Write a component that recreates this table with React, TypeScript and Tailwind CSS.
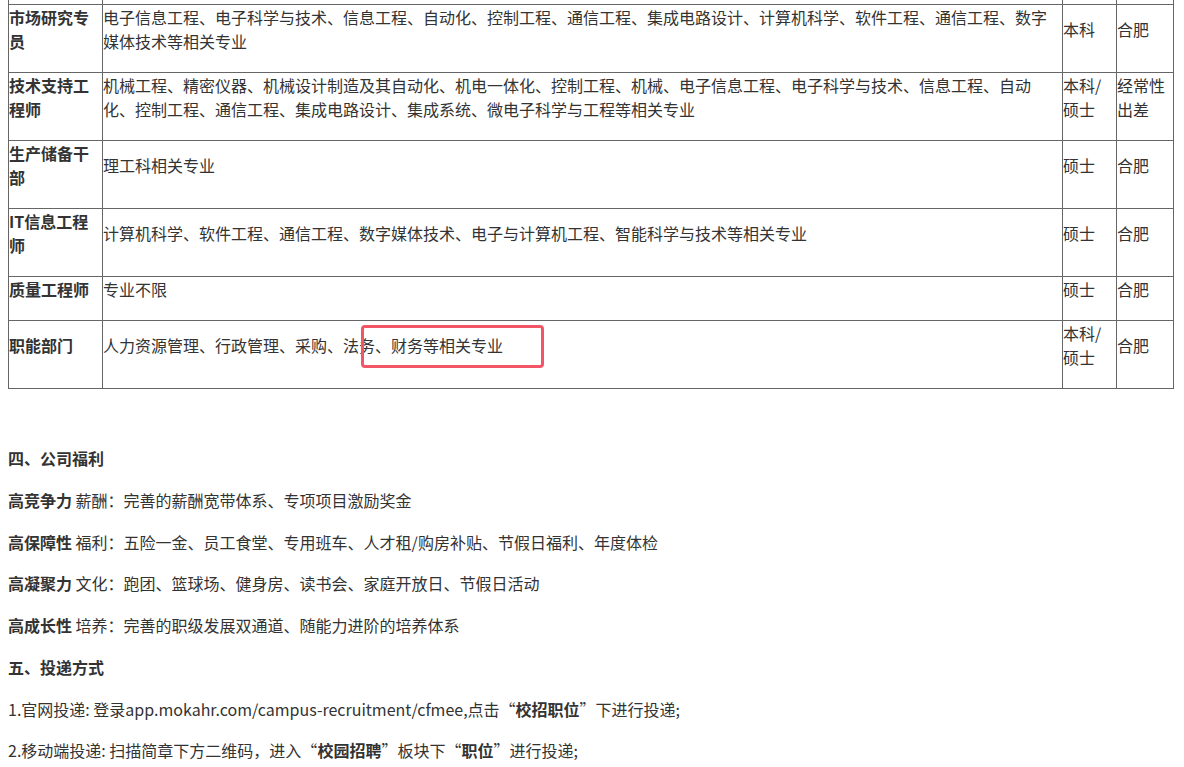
import React from 'react';

type Row = { title: string; major: string; degree: string; place: string };

const rows: Row[] = [
  {
    title: '市场研究专员',
    major: '电子信息工程、电子科学与技术、信息工程、自动化、控制工程、通信工程、集成电路设计、计算机科学、软件工程、通信工程、数字媒体技术等相关专业',
    degree: '本科',
    place: '合肥',
  },
  {
    title: '技术支持工程师',
    major: '机械工程、精密仪器、机械设计制造及其自动化、机电一体化、控制工程、机械、电子信息工程、电子科学与技术、信息工程、自动化、控制工程、通信工程、集成电路设计、集成系统、微电子科学与工程等相关专业',
    degree: '本科/硕士',
    place: '经常性出差',
  },
  { title: '生产储备干部', major: '理工科相关专业', degree: '硕士', place: '合肥' },
  {
    title: 'IT信息工程师',
    major: '计算机科学、软件工程、通信工程、数字媒体技术、电子与计算机工程、智能科学与技术等相关专业',
    degree: '硕士',
    place: '合肥',
  },
  { title: '质量工程师', major: '专业不限', degree: '硕士', place: '合肥' },
  { title: '职能部门', major: '人力资源管理、行政管理、采购、法务、财务等相关专业', degree: '本科/硕士', place: '合肥' },
];

const benefits = [
  { head: '高竞争力', text: '薪酬：完善的薪酬宽带体系、专项项目激励奖金' },
  { head: '高保障性', text: '福利：五险一金、员工食堂、专用班车、人才租/购房补贴、节假日福利、年度体检' },
  { head: '高凝聚力', text: '文化：跑团、篮球场、健身房、读书会、家庭开放日、节假日活动' },
  { head: '高成长性', text: '培养：完善的职级发展双通道、随能力进阶的培养体系' },
];

const cell = 'border border-[#666] align-middle p-0 pb-[19px] break-all';

export default function App() {
  return (
    <div
      className="h-[767px] overflow-hidden bg-white px-2 text-[16px] leading-[24px] text-[#333]"
      style={{ fontFamily: '"Noto Sans CJK SC", "Noto Sans", sans-serif' }}
    >
      <div className="relative -mt-[40px]">
        <table className="w-[1166px] table-fixed border-collapse">
          <colgroup>
            <col className="w-[94px]" />
            <col className="w-[960px]" />
            <col className="w-[54px]" />
            <col className="w-[57px]" />
          </colgroup>
          <tbody>
            {/* 上一行（滚出视口） */}
            <tr className="h-[44px]">
              <td className="border border-[#666]" />
              <td className="border border-[#666]" />
              <td className="border border-[#666]" />
              <td className="border border-[#666]" />
            </tr>
            {rows.map((r, i) => (
              <tr key={i} className={i === rows.length - 1 ? 'h-[67px]' : ''}>
                <td className={`${cell} font-bold`}>{r.title}</td>
                <td className={cell}>{r.major}</td>
                <td className={cell}>{r.degree}</td>
                <td className={cell}>{r.place}</td>
              </tr>
            ))}
          </tbody>
        </table>
        {/* 高亮框 */}
        <div className="pointer-events-none absolute left-[353px] bottom-[21px] h-[43px] w-[183px] rounded-[4px] border-[3px] border-[#f25566]" />
      </div>

      <div className="leading-[24px]">
        <p className="mt-[15.7px]">&nbsp;</p>
        <p className="mt-[17.7px] font-bold">四、公司福利</p>
        {benefits.map((b) => (
          <p key={b.head} className="mt-[17.7px]">
            <span className="font-bold">{b.head}</span> {b.text}
          </p>
        ))}
        <p className="mt-[17.7px] font-bold">五、投递方式</p>
        <p className="mt-[17.7px]">
          1.官网投递: 登录app.mokahr.com/campus-recruitment/cfmee,点击“<span className="font-bold">校招职位</span>”下进行投递;
        </p>
        <p className="mt-[17.7px]">
          2.移动端投递: 扫描简章下方二维码，进入“<span className="font-bold">校园招聘</span>”板块下“<span className="font-bold">职位</span>”进行投递;
        </p>
      </div>
    </div>
  );
}
